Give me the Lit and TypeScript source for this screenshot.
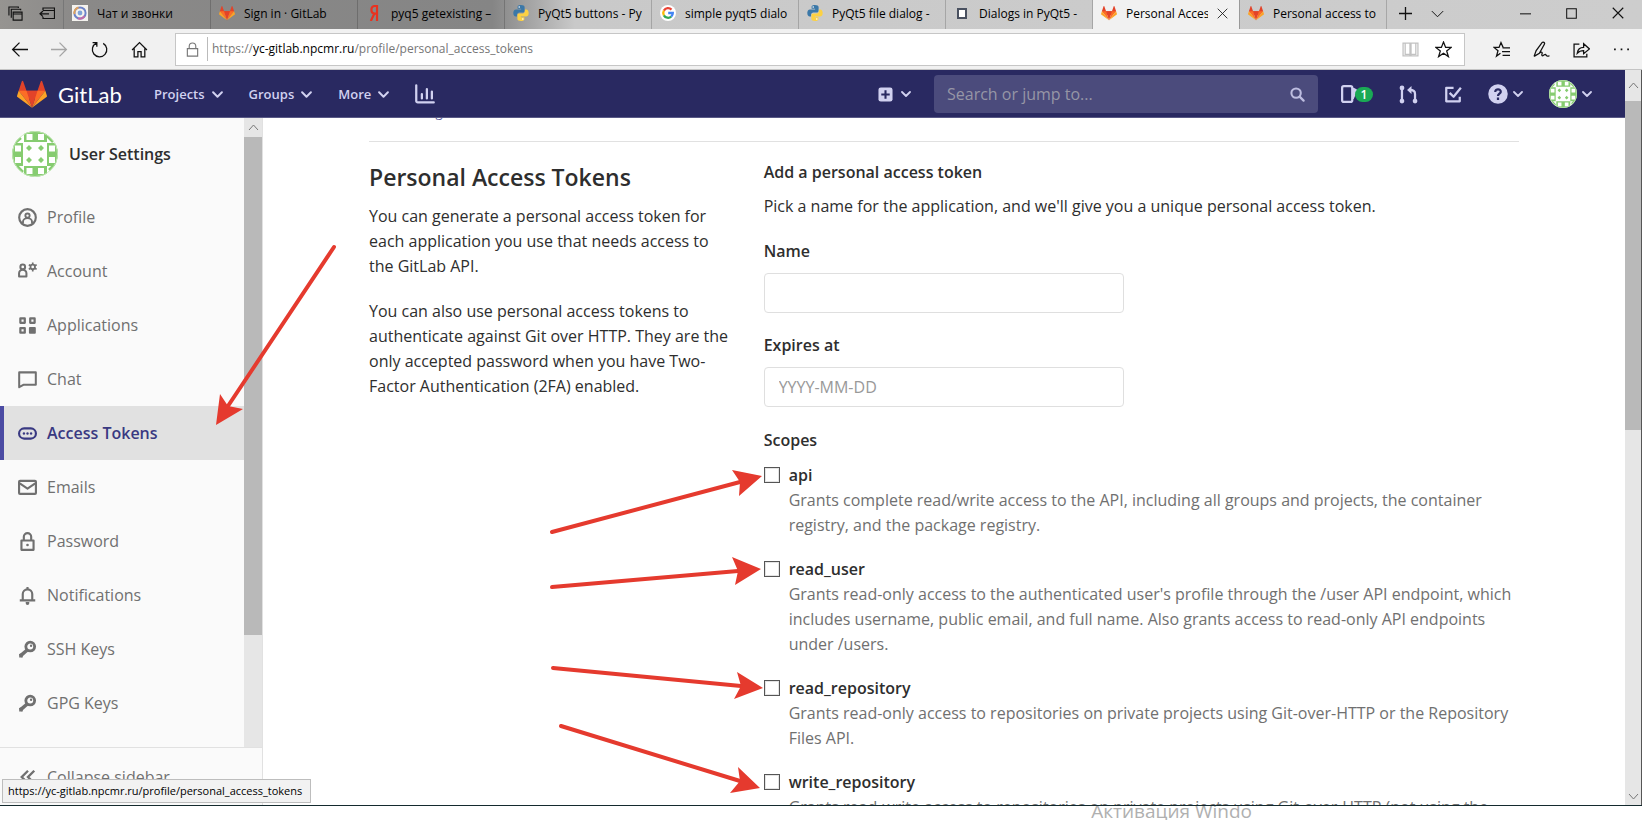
import { LitElement, html, css, svg, nothing, TemplateResult } from "lit";
import { customElement } from "lit/decorators.js";
import { classMap } from "lit/directives/class-map.js";

const fox = (size: number, cls = "") => html`<svg class=${cls} width=${size} height=${size} viewBox="0 0 36 36" aria-hidden="true">
  <path fill="#e24329" d="M2 14l9.4 9.1h13.2L34 14 30.2 2.6c-.3-.8-1.4-.8-1.6 0L24.600 14H11.400L7.400 2.600c-.2-.8-1.3-.8-1.6 0z"/>
  <path fill="#e24329" d="M18 34.400l6.600-20.400H11.400z"/>
  <path fill="#fc6d26" d="M18 34.400L11.400 14H2z M18 34.400L24.600 14H34z"/>
  <path fill="#fca326" d="M2 14L.1 20.100c-.2.600 0 1.200.5 1.500L18 34.400z M34 14l1.900 6.100c.2.600 0 1.200-.5 1.500L18 34.400z"/>
</svg>`;

const python = html`<svg width="16" height="16" viewBox="0 0 16 16" aria-hidden="true">
  <path fill="#3b78a8" d="M7.800 0C4.800 0 4.600 1.300 4.600 2v1.800h3.500v.6H3C1.200 4.400.3 5.900.3 8s1 3.600 2.500 3.600h1.300V9.800c0-1.200 1-2.200 2.200-2.200h3.500c1 0 1.800-.8 1.800-1.800V2c0-1.200-1.300-2-3.800-2z"/>
  <path fill="#fcd143" d="M8.200 16c3 0 3.200-1.300 3.200-2v-1.800H7.900v-.6H13c1.800 0 2.700-1.500 2.700-3.600s-1-3.600-2.500-3.600h-1.300v1.800c0 1.200-1 2.200-2.200 2.200H6.200c-1 0-1.800.8-1.800 1.800V14c0 1.200 1.300 2 3.800 2z"/>
  <circle cx="6.200" cy="2" r=".8" fill="#fff"/><circle cx="9.800" cy="14" r=".8" fill="#fff"/>
</svg>`;

const google = html`<svg width="16" height="16" viewBox="0 0 16 16" aria-hidden="true">
  <circle cx="8" cy="8" r="8" fill="#fff"/>
  <g fill="none" stroke-width="2.300">
    <path stroke="#ea4335" d="M3.900 5.600A4.800 4.800 0 0 1 11.500 4.600"/>
    <path stroke="#fbbc05" d="M3.900 10.400a4.800 4.800 0 0 1 0-4.800"/>
    <path stroke="#34a853" d="M3.900 10.400a4.800 4.800 0 0 0 7.300 1.200"/>
    <path stroke="#4285f4" d="M11.200 11.600A4.800 4.800 0 0 0 12.800 8H8.200"/>
  </g>
</svg>`;

const yandex = html`<svg width="16" height="16" viewBox="0 0 16 16" aria-hidden="true">
  <path fill="none" stroke="#e8321f" stroke-width="2.200" d="M11 16V1H9C6.600 1 5.400 2.600 5.400 4.800S6.800 8.600 9 8.600h2M8.400 8.600L4.800 16"/>
</svg>`;

const chat = html`<svg width="16" height="16" viewBox="0 0 16 16" aria-hidden="true">
  <rect width="16" height="16" fill="#f4f2ee"/>
  <circle cx="8" cy="8" r="5.600" fill="none" stroke="#6d83c9" stroke-width="2"/>
  <path d="M2.500 9a5.600 5.600 0 0 1 4-6.500" fill="none" stroke="#e0a25c" stroke-width="2"/>
  <path d="M6 13.200a5.600 5.600 0 0 0 6.500-2" fill="none" stroke="#c26ba8" stroke-width="2"/>
  <circle cx="8" cy="8" r="2.400" fill="#7fa3d8"/>
</svg>`;

const square = html`<svg width="16" height="16" viewBox="0 0 16 16" aria-hidden="true">
  <rect x="4" y="4" width="8" height="9" fill="#fff" stroke="#4a5160" stroke-width="2"/>
</svg>`;

const chevron = (size = 10) => html`<svg class="chev" width=${size} height=${size} viewBox="0 0 10 10" aria-hidden="true">
  <path d="M1 3l4 4 4-4" fill="none" stroke="currentColor" stroke-width="1.800" stroke-linecap="round" stroke-linejoin="round"/></svg>`;

const identicon = (size: number) => html`<svg width=${size} height=${size} viewBox="0 0 46 46" aria-hidden="true">
  <defs><clipPath id="round"><circle cx="23" cy="23" r="23"/></clipPath></defs>
  <g clip-path="url(#round)">
    <rect width="46" height="46" fill="#fff"/>
    <g fill="#86cc70">
      <path d="M12 0h23v11H12z M12 35h23v11H12z M0 12h11v23H0z M35 12h11v23H35z"/>
      <path d="M17 14l3 3-3 3-3-3z M29 14l3 3-3 3-3-3z M17 26l3 3-3 3-3-3z M29 26l3 3-3 3-3-3z"/>
    </g>
    <path fill="none" stroke="#86cc70" stroke-width="2.500" d="M3 12L9 7M35 5l6 6M5 35l6 6M37 39l6-6"/>
    <circle cx="23" cy="23" r="22.500" fill="none" stroke="#c5e6ba"/>
    <path fill="#fff" d="M14.500 3h6v6h-6z M26 3h6v6h-6z M14.500 37h6v6h-6z M26 37h6v6h-6z M3 14.500h6v6H3z M3 26h6v6H3z M37 14.500h6v6h-6z M37 26h6v6h-6z"/>
  </g></svg>`;

const line = (d: string, w = 2) =>
  svg`<path d=${d} fill="none" stroke="currentColor" stroke-width=${w} stroke-linejoin="round"/>`;

const sideIcons: Record<string, unknown> = {
  profile: svg`<circle cx="8" cy="8" r="7" fill="none" stroke="currentColor" stroke-width="1.800"/><circle cx="8" cy="6.400" r="1.800" fill="none" stroke="currentColor" stroke-width="1.600"/>${line("M4.200 12.800V11.500A3.800 3 0 0 1 11.800 11.500V12.800", 1.600)}`,
  account: svg`<circle cx="4" cy="4.200" r="2" fill="none" stroke="currentColor" stroke-width="1.700"/>${line("M.9 12.200V9.500A3.100 3 0 0 1 7.100 9.500v2.700z", 1.700)}<circle cx="12.400" cy="4.200" r="1.900" fill="none" stroke="currentColor" stroke-width="1.500"/><path d="M12.400.4v1.800M12.400 6.200V8M9.100 2.300l1.600.9M14.100 5.200l1.600.9M9.100 6.100l1.600-.9M14.100 3.200l1.600-.9" stroke="currentColor" stroke-width="1.400"/>`,
  apps: svg`${line("M2 2h3.700v3.700H2zM10.300 2H14v3.700h-3.700zM2 10.300h3.700V14H2z", 1.900)}<rect x="9.200" y="9.200" width="5.800" height="5.800" rx=".8" fill="currentColor"/>`,
  comment: line("M1 2h14v10.500H4.500L1 14.500z", 1.700),
  token: svg`<rect x=".9" y="3.700" width="14.200" height="8.600" rx="4.300" fill="none" stroke="currentColor" stroke-width="1.800"/><circle cx="5" cy="8" r="1" fill="currentColor"/><circle cx="8" cy="8" r="1" fill="currentColor"/><circle cx="11" cy="8" r="1" fill="currentColor"/>`,
  mail: svg`<rect x=".9" y="2.400" width="14.200" height="11" rx=".8" fill="none" stroke="currentColor" stroke-width="1.800"/>${line("M1.500 4.500L8 9l6.500-4.500", 1.700)}`,
  lock: svg`${line("M2.900 7.200h10.200V15H2.900z", 1.800)}${line("M4.900 7V4a3.100 3.100 0 0 1 6.200 0v3", 1.800)}<circle cx="8" cy="11" r="1.100" fill="currentColor"/>`,
  bell: svg`${line("M4 12V6.800a4 4 0 0 1 8 0V12", 1.800)}<path d="M1.500 11.200h13V13h-13zM6.500 13.500h3v1a1 1 0 0 1-3 0zM7.100.8h1.800v2H7.100z" fill="currentColor"/>`,
  key: svg`<circle cx="10.300" cy="5.500" r="3.700" fill="none" stroke="currentColor" stroke-width="2.400"/><circle cx="11" cy="4.800" r="1" fill="currentColor"/>${line("M8 8.200L1.800 13.600", 3)}<path d="M1 11.800l4.500-1.500-1.500 3v1.400H1z" fill="currentColor"/>`,
};

const tabs: { label: string; icon: TemplateResult; active?: boolean }[] = [
  { label: "Чат и звонки", icon: chat },
  { label: "Sign in · GitLab", icon: fox(16) },
  { label: "pyq5 getexisting –", icon: yandex },
  { label: "PyQt5 buttons - Py", icon: python },
  { label: "simple pyqt5 dialo", icon: google },
  { label: "PyQt5 file dialog -", icon: python },
  { label: "Dialogs in PyQt5 -", icon: square },
  { label: "Personal Access", icon: fox(16), active: true },
  { label: "Personal access to", icon: fox(16) },
];

const menu = [
  ["Profile", "profile"],
  ["Account", "account"],
  ["Applications", "apps"],
  ["Chat", "comment"],
  ["Access Tokens", "token"],
  ["Emails", "mail"],
  ["Password", "lock"],
  ["Notifications", "bell"],
  ["SSH Keys", "key"],
  ["GPG Keys", "key"],
];

const scopes = [
  ["api", "Grants complete read/write access to the API, including all groups and projects, the container registry, and the package registry."],
  ["read_user", "Grants read-only access to the authenticated user's profile through the /user API endpoint, which includes username, public email, and full name. Also grants access to read-only API endpoints under /users."],
  ["read_repository", "Grants read-only access to repositories on private projects using Git-over-HTTP or the Repository Files API."],
  ["write_repository", "Grants read-write access to repositories on private projects using Git-over-HTTP (not using the API)."],
];

const reset = css`
  * { box-sizing: border-box; }
  button { font: inherit; color: inherit; background: none; border: 0; padding: 0; margin: 0; display: flex; align-items: center; }
  a { color: inherit; text-decoration: none; }
  h4, h5, p { margin: 0; font: inherit; }
  svg { display: block; flex: none; }
`;

@customElement("browser-chrome")
export class BrowserChrome extends LitElement {
  static styles = [reset, css`
    :host { display: block; font-size: 12px; color: #000; }
    .tabbar { display: flex; height: 29px; background: linear-gradient(90deg, #969491 0, #8a8988 5%, #858585 30%, #c9c9c9 35%, #cdcdcd 100%); }
    .lead { display: flex; align-items: center; gap: 16px; width: 64px; padding: 0 0 3px 8px; border-right: 1px solid #777; }
    .tab { width: 147px; gap: 9px; padding: 0 7px 3px 8px; border-right: 1px solid rgba(0, 0, 0, .18); white-space: nowrap; text-align: left; min-width: 0; }
    .tab .label { flex: 1; overflow: hidden; min-width: 0; }
    .tab.active { background: #f1f1f1; border-right-color: #999; padding-right: 11px; }
    .extra, .winbtns { display: flex; align-items: center; padding-bottom: 3px; }
    .extra { gap: 19px; padding-left: 12px; }
    .winbtns { gap: 35px; margin-left: auto; padding-right: 18px; }
    .toolbar { display: flex; align-items: center; height: 41px; background: #f1f1f1; border-bottom: 1px solid #c4c4c4; padding: 0 12px 0 11px; }
    .nav { display: flex; gap: 23px; width: 164px; }
    .field { flex: 1; display: flex; align-items: center; height: 33px; margin-right: 28px; background: #fff; border: 1px solid #c6c6c6; padding: 0 12px 0 9px; }
    .url { flex: 1; height: 24px; line-height: 24px; margin-left: 7px; padding-left: 4px; border-left: 1px solid #bbb; color: #767676; }
    .url b { font-weight: 400; color: #000; }
    .marks { display: flex; gap: 16px; }
    .tools { display: flex; gap: 23px; }
  `];

  render() {
    const s = (size: number, body: unknown, color = "#111") => html`<svg width=${size} height=${size} viewBox="0 0 16 16" fill="none" stroke=${color} stroke-width="1.200" aria-hidden="true">${body}</svg>`;
    return html`
      <div class="tabbar">
        <div class="lead">
          <button aria-label="Tabs set aside">${s(15, svg`<path d="M1 10V1h10v1M3.500 12.500V3.500h10v1M5.500 6.500h9.500V15H5.500zM5.500 8.500H15" />`)}</button>
          <button aria-label="Set tabs aside">${s(16, svg`<path d="M4 5V3h11.500v10.500H4V12M4 5.500h11.500M1 8.800h9M4 6L1 8.800 4 11.600"/>`)}</button>
        </div>
        ${tabs.map((t) => html`<button class=${classMap({ tab: true, active: !!t.active })}>
          ${t.icon}<span class="label">${t.label}</span>
          ${t.active ? s(11, svg`<path d="M1 1l14 14M15 1L1 15"/>`) : nothing}
        </button>`)}
        <div class="extra">
          <button aria-label="New tab">${s(13, svg`<path stroke-width="1.600" d="M8 0v16M0 8h16"/>`)}</button>
          <button aria-label="Tab previews">${s(13, svg`<path d="M1 5l7 7 7-7"/>`)}</button>
        </div>
        <div class="winbtns">
          <button aria-label="Minimize">${s(11, svg`<path stroke-width="1.500" d="M0 8.500h16"/>`)}</button>
          <button aria-label="Maximize">${s(11, svg`<path stroke-width="1.500" d="M1 1h14v14H1z"/>`)}</button>
          <button aria-label="Close window">${s(12, svg`<path stroke-width="1.500" d="M1 1l14 14M15 1L1 15"/>`)}</button>
        </div>
      </div>
      <div class="toolbar">
        <div class="nav">
          <button aria-label="Back">${s(17, svg`<path d="M16 8H1.500M8 1.500L1.500 8 8 14.500"/>`)}</button>
          <button aria-label="Forward">${s(17, svg`<path d="M0 8h14.500M8 1.500L14.500 8 8 14.500"/>`, "#a5a5a5")}</button>
          <button aria-label="Refresh">${s(17, svg`<path d="M5 2A6.800 6.800 0 1 0 11.500 2.200M1.500 1.500H5.500V5.500"/>`)}</button>
          <button aria-label="Home">${s(17, svg`<path d="M1 8.500L8 1.500l7 7M3 7v8h3.500v-5h3v5H13V7"/>`)}</button>
        </div>
        <div class="field">
          ${s(15, svg`<path d="M2.500 7h11v8h-11zM4.500 7V4.500a3.500 3.500 0 0 1 7 0V7"/>`, "#777")}
          <div class="url">https://<b>yc-gitlab.npcmr.ru</b>/profile/personal_access_tokens</div>
          <div class="marks">
            <button aria-label="Reading view">${s(17, svg`<path d="M1 2h6.500v12H1zM8.500 2H15v12H8.500zM3 2v10.500h4.500M13 2v10.500H8.500"/>`, "#c2c2c2")}</button>
            <button aria-label="Add to favorites">${s(17, svg`<path d="M8 1l2 5h5.200l-4.200 3.400 1.600 5.300L8 11.500l-4.600 3.200L5 9.400.8 6H6z"/>`)}</button>
          </div>
        </div>
        <div class="tools">
          <button aria-label="Favorites">${s(17, svg`<path d="M9.500 6L7.500 1.500 5.700 6H1l3.700 3.200-1.400 5L7 11.500M9 6.500h7M8.500 10H16M9 13.500h7"/>`)}</button>
          <button aria-label="Add notes">${s(17, svg`<path d="M1 14.500L3 9 8.500 1.500c1-1 3 0 2.200 1.500L6 11.500l-5 3M6.500 11c1.500-1 2.500-.5 2 1s0 2.500 1.500 1.500 1.500-1.500 2.500 0 1.500.5 3 .5"/>`)}</button>
          <button aria-label="Share">${s(17, svg`<path d="M6 3H1v12h12v-3M4 11.500C4.500 8 6.500 6 10 6V2.500L15.500 7.500 10 12V9C7.500 9 5.500 9.800 4 11.500z"/>`)}</button>
          <button aria-label="More">${s(17, svg`<path stroke="none" fill="#111" d="M1 7h1.600v1.600H1zM7.200 7h1.600v1.600H7.200zM13.400 7H15v1.600h-1.600z"/>`)}</button>
        </div>
      </div>`;
  }
}

@customElement("gitlab-navbar")
export class GitlabNavbar extends LitElement {
  static styles = [reset, css`
    :host { display: block; }
    .bar { display: flex; align-items: center; height: 48px; padding: 1px 33px 0 17px; background: #292961; border-bottom: 1px solid #595986; color: #d1d1f0; font-weight: 600; }
    .brand { display: flex; align-items: center; gap: 11px; width: 137px; color: #fff; font-family: Lato, "Open Sans", sans-serif; font-size: 22px; font-weight: 400; }
    .menus { display: flex; align-items: center; gap: 26px; flex: 1; font-size: 13px; }
    .menus button { gap: 7px; }
    .pair { gap: 5px; }
    .new { gap: 8px; }
    .search { display: flex; align-items: center; width: 384px; height: 38px; margin-left: 23px; padding: 0 13px; border-radius: 4px; background: #4b4b7c; color: #bdbde0; }
    .search input { flex: 1; min-width: 0; border: 0; padding: 0; background: none; font: 400 16px "Open Sans", sans-serif; color: #fff; outline: 0; }
    .search input::placeholder { color: #9696a6; opacity: 1; }
    .right { display: flex; align-items: center; margin-left: 23px; gap: 26px; }
    .issues { display: flex; width: 32px; }
    .badge { margin-left: -4px; width: 18px; height: 15px; line-height: 15px; border-radius: 8px; background: #1aaa55; color: #fff; font-size: 12px; text-align: center; z-index: 1; }
  `];

  render() {
    const i = (size: number, body: unknown) => html`<svg width=${size} height=${size} viewBox="0 0 16 16" fill="none" stroke="currentColor" stroke-width="1.800" stroke-linejoin="round" aria-hidden="true">${body}</svg>`;
    return html`<div class="bar">
      <a class="brand" href="#">${fox(30)}<span>GitLab</span></a>
      <div class="menus">
        ${["Projects", "Groups", "More"].map((m) => html`<button>${m}${chevron(11)}</button>`)}
        <button aria-label="Analytics">${i(20, svg`<path stroke-linecap="round" d="M1 1v12.500a1.200 1.200 0 0 0 1.200 1.200H15M5.500 8v3.500M9.500 4v7.500M13.500 6v5.500"/>`)}</button>
      </div>
      <button class="new" aria-label="New">
        ${i(15, svg`<rect x=".5" y=".5" width="15" height="15" rx="2.500" fill="currentColor" stroke="none"/><path stroke="#292961" stroke-width="2.200" d="M8 3.500v9M3.500 8h9"/>`)}${chevron(10)}
      </button>
      <label class="search"><input aria-label="Search" placeholder="Search or jump to..." />
        ${i(15, svg`<circle cx="6.500" cy="6.500" r="5" stroke-width="2.200"/><path stroke-width="2.400" stroke-linecap="round" d="M10.500 10.500L14.500 14.500"/>`)}</label>
      <div class="right">
        <button class="issues" aria-label="Issues">${i(18, svg`<rect x="1" y="1" width="9" height="14" rx="1.500" stroke-width="2"/><path d="M11 3l3 1.500-3 7.500z" fill="currentColor" stroke="currentColor" stroke-width="1"/>`)}<span class="badge">1</span></button>
        <button aria-label="Merge requests">${i(19, svg`<path stroke-width="1.900" d="M2.500 3v11M13.500 14V7.500C13.500 5.500 12.500 4.200 9 4.200"/><path d="M10.500.8v6.800L6.800 4.200z" fill="currentColor" stroke="none"/><circle cx="2.500" cy="2.500" r="2" fill="currentColor" stroke="none"/><circle cx="2.500" cy="13.500" r="2" fill="currentColor" stroke="none"/><circle cx="13.500" cy="13.500" r="2" fill="currentColor" stroke="none"/>`)}</button>
        <button aria-label="To-Do List">${i(18, svg`<path stroke-width="2" d="M8.500 2.500H2V14.500h12v-4M5 7l3.500 3.500L15 2.500"/>`)}</button>
        <button class="pair" aria-label="Help">${i(20, svg`<circle cx="8" cy="8" r="7.800" fill="currentColor" stroke="none"/><path stroke="#292961" stroke-width="1.800" d="M5.800 6.300C5.800 3.500 10.400 3.700 10.200 6.300 10.100 7.800 8 7.800 8 9.600M8 10.800v1.900"/>`)}${chevron(10)}</button>
        <button class="pair" aria-label="User menu">${identicon(28)}${chevron(10)}</button>
      </div>
    </div>`;
  }
}

@customElement("scroll-rail")
export class ScrollRail extends LitElement {
  static styles = [reset, css`
    :host { display: grid; background: #e6e6e6; justify-items: stretch; overflow: hidden; }
    .arrow { display: flex; align-items: center; justify-content: center; color: #777; }
    .thumb { background: #b9b9b9; }
    :host([open-ended]) .end { display: none; }
  `];

  render() {
    return html`
      <div class="arrow"><svg width="11" height="7" viewBox="0 0 11 7"><path d="M1 6l4.500-5L10 6" fill="none" stroke="currentColor"/></svg></div>
      <div class="thumb"></div><div></div>
      <div class="arrow end"><svg width="11" height="7" viewBox="0 0 11 7"><path d="M1 1l4.500 5L10 1" fill="none" stroke="currentColor"/></svg></div>`;
  }
}

@customElement("settings-sidebar")
export class SettingsSidebar extends LitElement {
  static styles = [reset, css`
    :host { display: flex; flex-direction: column; background: #fafafa; border-right: 1px solid #e1e1e1; color: #707070; overflow: hidden; }
    .body { flex: 1; display: flex; min-height: 0; overflow: hidden; }
    .list { flex: 1; overflow: hidden; }
    .head { display: flex; align-items: center; gap: 11px; height: 72px; padding: 0 12px; color: #2e2e2e; font-weight: 600; }
    .item { display: flex; align-items: center; gap: 10px; height: 54px; padding-left: 18px; }
    .item.active { background: #e1e1e1; border-left: 4px solid #4b4ba3; padding-left: 14px; color: #393982; font-weight: 600; }
    .rail { width: 18px; grid-template-rows: 19px 498fr 112fr; }
    .collapse { height: 58px; border-top: 1px solid #e1e1e1; padding: 1px 0 0 18px; gap: 9px; }
  `];

  render() {
    return html`
      <div class="body">
        <nav class="list">
          <a class="head" href="#">${identicon(46)}<span>User Settings</span></a>
          ${menu.map(([label, icon]) => html`<a href="#" class=${classMap({ item: true, active: icon === "token" })}>
            <svg width="19" height="19" viewBox="0 0 16 16" aria-hidden="true">${sideIcons[icon]}</svg><span>${label}</span></a>`)}
        </nav>
        <scroll-rail class="rail" open-ended></scroll-rail>
      </div>
      <button class="collapse"><svg width="20" height="20" viewBox="0 0 16 16" aria-hidden="true"><path d="M8 3L3 8l5 5M13 3L8 8l5 5" fill="none" stroke="currentColor" stroke-width="1.900"/></svg>Collapse sidebar</button>`;
  }
}

@customElement("token-page")
export class TokenPage extends LitElement {
  static styles = [reset, css`
    :host { display: block; overflow: hidden; background: #fff; color: #2e2e2e; line-height: 25px; }
    .container { max-width: 1190px; margin: 0 auto; padding: 0 20px; }
    .crumbs { margin-top: -16px; height: 40px; line-height: 20px; font-size: 13px; border-bottom: 1px solid #e1e1e1; color: #5c5c9e; }
    .row { display: grid; grid-template-columns: minmax(0, 1fr) minmax(0, 2fr); column-gap: 17px; }
    .intro { padding: 19px 12px 0 0; }
    .intro h4 { font-size: 23px; line-height: 32px; font-weight: 600; margin-bottom: 11px; }
    .intro p { margin-bottom: 20px; }
    form { padding-top: 18px; }
    h5 { font-weight: 600; margin-bottom: 9px; }
    .lead { margin-bottom: 20px; }
    .group { display: flex; flex-direction: column; margin-bottom: 20px; }
    .group label { font-weight: 600; margin-bottom: 9px; }
    .legend { font-weight: 600; margin-bottom: 10px; padding-top: 1px; }
    .group input { width: 360px; max-width: 100%; height: 40px; padding: 0 14px; border: 1px solid #dfdfdf; border-radius: 4px; font: inherit; color: #2e2e2e; background: #fff; }
    .group input::placeholder { color: #999; opacity: 1; }
    .scope { display: grid; grid-template-columns: 16px 1fr; column-gap: 9px; margin-bottom: 19px; }
    .scope input { appearance: none; width: 16px; height: 16px; margin: 4px 0 0; border: 1px solid #555; background: #fff; box-shadow: inset 0 0 0 1px #e4e4e4; }
    .scope label { font-weight: 600; }
    .scope p { grid-column: 2; color: #707070; }
  `];

  render() {
    return html`<div class="container">
      <div class="crumbs"><a href="#">User Settings</a></div>
      <div class="row">
        <section class="intro">
          <h4>Personal Access Tokens</h4>
          <p>You can generate a personal access token for each application you use that needs access to the GitLab API.</p>
          <p>You can also use personal access tokens to authenticate against Git over HTTP. They are the only accepted password when you have Two-Factor Authentication (2FA) enabled.</p>
        </section>
        <form>
          <h5>Add a personal access token</h5>
          <p class="lead">Pick a name for the application, and we'll give you a unique personal access token.</p>
          <div class="group"><label for="name">Name</label><input id="name" type="text" /></div>
          <div class="group"><label for="expires">Expires at</label><input id="expires" type="text" placeholder="YYYY-MM-DD" /></div>
          <p class="legend">Scopes</p>
          ${scopes.map(([name, text]) => html`<div class="scope">
            <input type="checkbox" id=${name} /><label for=${name}>${name}</label><p>${text}</p></div>`)}
        </form>
      </div>
    </div>`;
  }
}

/* Each arrow: tail, then tip, barb, notch, barb of the head. */
const arrows = [
  { tail: [334, 247], head: [[216, 425], [220, 394], [228, 406], [243, 409]] },
  { tail: [552, 532], head: [[762, 476], [732, 470], [740, 482], [739, 496]] },
  { tail: [552, 587], head: [[761, 569], [732, 557], [738, 571], [735, 585]] },
  { tail: [553, 668], head: [[763, 688], [737, 672], [741, 686], [734, 699]] },
  { tail: [561, 726], head: [[760, 788], [738, 767], [740, 781], [730, 793]] },
];

@customElement("app-root")
export class AppRoot extends LitElement {
  static styles = [reset, css`
    :host { position: relative; display: flex; flex-direction: column; height: 100vh; overflow: hidden; background: #fff; font-family: "Open Sans", "Noto Sans", sans-serif; font-size: 16px; }
    .window { position: relative; flex: 1; display: flex; flex-direction: column; min-height: 0; border-bottom: 1px solid #142a2e; }
    .view { flex: 1; display: flex; min-height: 0; border-right: 1px solid #555; }
    .site { flex: 1; display: flex; flex-direction: column; min-width: 0; }
    .content { flex: 1; display: flex; min-height: 0; }
    .side { width: 263px; }
    .page { flex: 1; }
    .rail { width: 16px; grid-template-rows: 31px 329fr 358fr 16px; }
    .status { position: absolute; left: 2px; bottom: 2px; height: 24px; padding: 0 8px 0 5px; border: 1px solid #bdbdbd; background: #f2f2f2; color: #000; font-size: 11px; line-height: 22px; }
    .desktop { height: 14px; overflow: hidden; padding-right: 390px; }
    .desktop span { display: block; margin-top: -7px; line-height: 24px; font-size: 19px; color: #b0b0b0; white-space: nowrap; text-align: right; }
    .notes { position: absolute; left: 0; top: 0; pointer-events: none; }
  `];

  render() {
    return html`
      <div class="window">
        <browser-chrome></browser-chrome>
        <div class="view">
          <div class="site">
            <gitlab-navbar></gitlab-navbar>
            <div class="content">
              <settings-sidebar class="side"></settings-sidebar>
              <token-page class="page"></token-page>
            </div>
          </div>
          <scroll-rail class="rail"></scroll-rail>
        </div>
        <div class="status">https://yc-gitlab.npcmr.ru/profile/personal_access_tokens</div>
      </div>
      <div class="desktop"><span>Активация Windo</span></div>
      <svg class="notes" width="1642" height="820" aria-hidden="true">
        ${arrows.map((a) => svg`
          <line x1=${a.tail[0]} y1=${a.tail[1]} x2=${a.head[2][0]} y2=${a.head[2][1]} stroke="#e53a2e" stroke-width="4" stroke-linecap="round"/>
          <polygon points=${a.head.map((p) => p.join(",")).join(" ")} fill="#e53a2e"/>`)}
      </svg>`;
  }
}
